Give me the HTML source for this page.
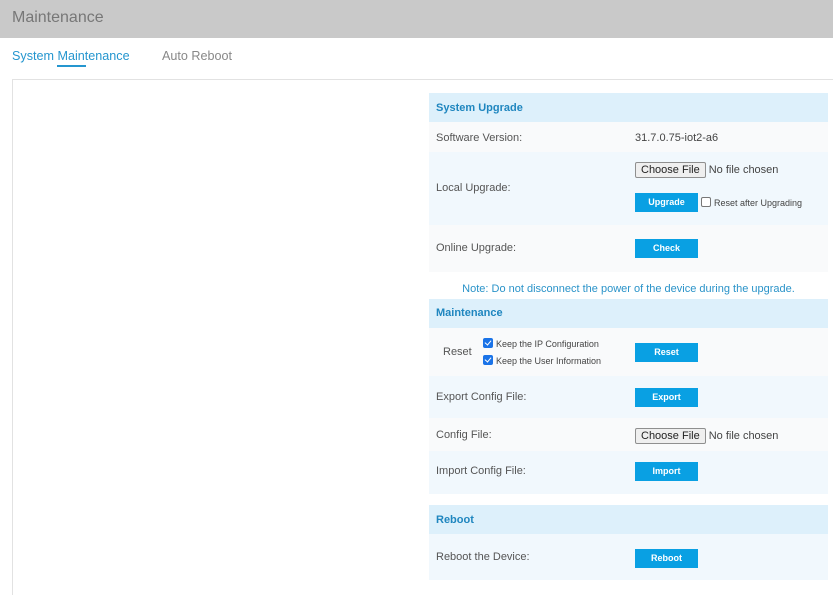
<!DOCTYPE html>
<html style="overflow:hidden;height:595px"><head><meta charset="utf-8"><style>
*{margin:0;padding:0;box-sizing:border-box}
body{width:833px;height:595px;overflow:hidden;background:#fff;font-family:"Liberation Sans",Arial,sans-serif;position:relative}
.a{position:absolute}
.hdr{left:0;top:0;width:833px;height:38px;background:#c9c9c9}
.hdr span{position:absolute;left:12px;top:9px;font-size:16px;color:#777}
.tab{font-size:12.6px;top:49px}
.box{left:12px;top:79px;width:830px;height:525px;border:1px solid #e2e2e2}
.row{left:429px;width:399px}
.sh{background:#ddf0fb;font-weight:bold;font-size:11px;color:#1f86bf}
.sh span{position:absolute;left:7px}
.lbl{position:absolute;left:7px;font-size:11px;color:#555}
.btn{position:absolute;left:206px;width:63px;height:19px;background:#09a0e3;color:#fff;font-size:9px;font-weight:bold;text-align:center;line-height:19px}
.cf{position:absolute;left:206px;font-size:11px;color:#444;white-space:nowrap}
.cf b{display:inline-block;font-weight:normal;border:1px solid #8f8f8f;background:#efefef;border-radius:2px;padding:1px 5px;color:#222;margin-right:3px}
.cb{display:inline-block;width:10px;height:10px;border-radius:2px;vertical-align:-1px;margin-right:3px;position:relative}
.chk{background:#1a73e8}
.chk:after{content:"";position:absolute;left:3px;top:1px;width:3px;height:5px;border:solid #fff;border-width:0 1.5px 1.5px 0;transform:rotate(40deg)}
.unc{border:1px solid #777;background:#fff}
</style></head><body>
<div class="a hdr"><span>Maintenance</span></div>
<div class="a tab" style="left:12px;color:#2596cf">System Maintenance</div>
<div class="a" style="left:57px;top:65px;width:29px;height:2px;background:#2596cf"></div>
<div class="a tab" style="left:162px;color:#888">Auto Reboot</div>
<div class="a box"></div>

<div class="a row sh" style="top:93px;height:29px"><span style="top:9px">System Upgrade</span></div>
<div class="a row" style="top:122px;height:30px;background:#f9fafb"><span class="lbl" style="top:10px">Software Version:</span><span class="cf" style="top:10px">31.7.0.75-iot2-a6</span></div>
<div class="a row" style="top:152px;height:73px;background:#f1f8fd"><span class="lbl" style="top:30px">Local Upgrade:</span>
<span class="cf" style="top:10px"><b>Choose File</b>No file chosen</span>
<span class="btn" style="top:41px">Upgrade</span>
<span class="cf" style="top:45px;left:272px;font-size:9px"><span class="cb unc"></span>Reset after Upgrading</span></div>
<div class="a row" style="top:225px;height:47px;background:#f9fafb"><span class="lbl" style="top:17px">Online Upgrade:</span><span class="btn" style="top:14px">Check</span></div>
<div class="a row" style="top:283px;text-align:center;font-size:11px;color:#2a93c9">Note: Do not disconnect the power of the device during the upgrade.</div>

<div class="a row sh" style="top:299px;height:29px"><span style="top:8px">Maintenance</span></div>
<div class="a row" style="top:328px;height:48px;background:#f9fafb"><span class="lbl" style="top:18px;left:14px">Reset</span>
<span class="cf" style="top:10px;left:54px;font-size:9px"><span class="cb chk"></span>Keep the IP Configuration</span>
<span class="cf" style="top:27px;left:54px;font-size:9px"><span class="cb chk"></span>Keep the User Information</span>
<span class="btn" style="top:15px">Reset</span></div>
<div class="a row" style="top:376px;height:42px;background:#f1f8fd"><span class="lbl" style="top:15px">Export Config File:</span><span class="btn" style="top:12px">Export</span></div>
<div class="a row" style="top:418px;height:33px;background:#f9fafb"><span class="lbl" style="top:11px">Config File:</span><span class="cf" style="top:10px"><b>Choose File</b>No file chosen</span></div>
<div class="a row" style="top:451px;height:43px;background:#f1f8fd"><span class="lbl" style="top:14px">Import Config File:</span><span class="btn" style="top:11px">Import</span></div>

<div class="a row sh" style="top:505px;height:29px"><span style="top:9px">Reboot</span></div>
<div class="a row" style="top:534px;height:46px;background:#f1f8fd"><span class="lbl" style="top:17px">Reboot the Device:</span><span class="btn" style="top:15px">Reboot</span></div>
</body></html>
